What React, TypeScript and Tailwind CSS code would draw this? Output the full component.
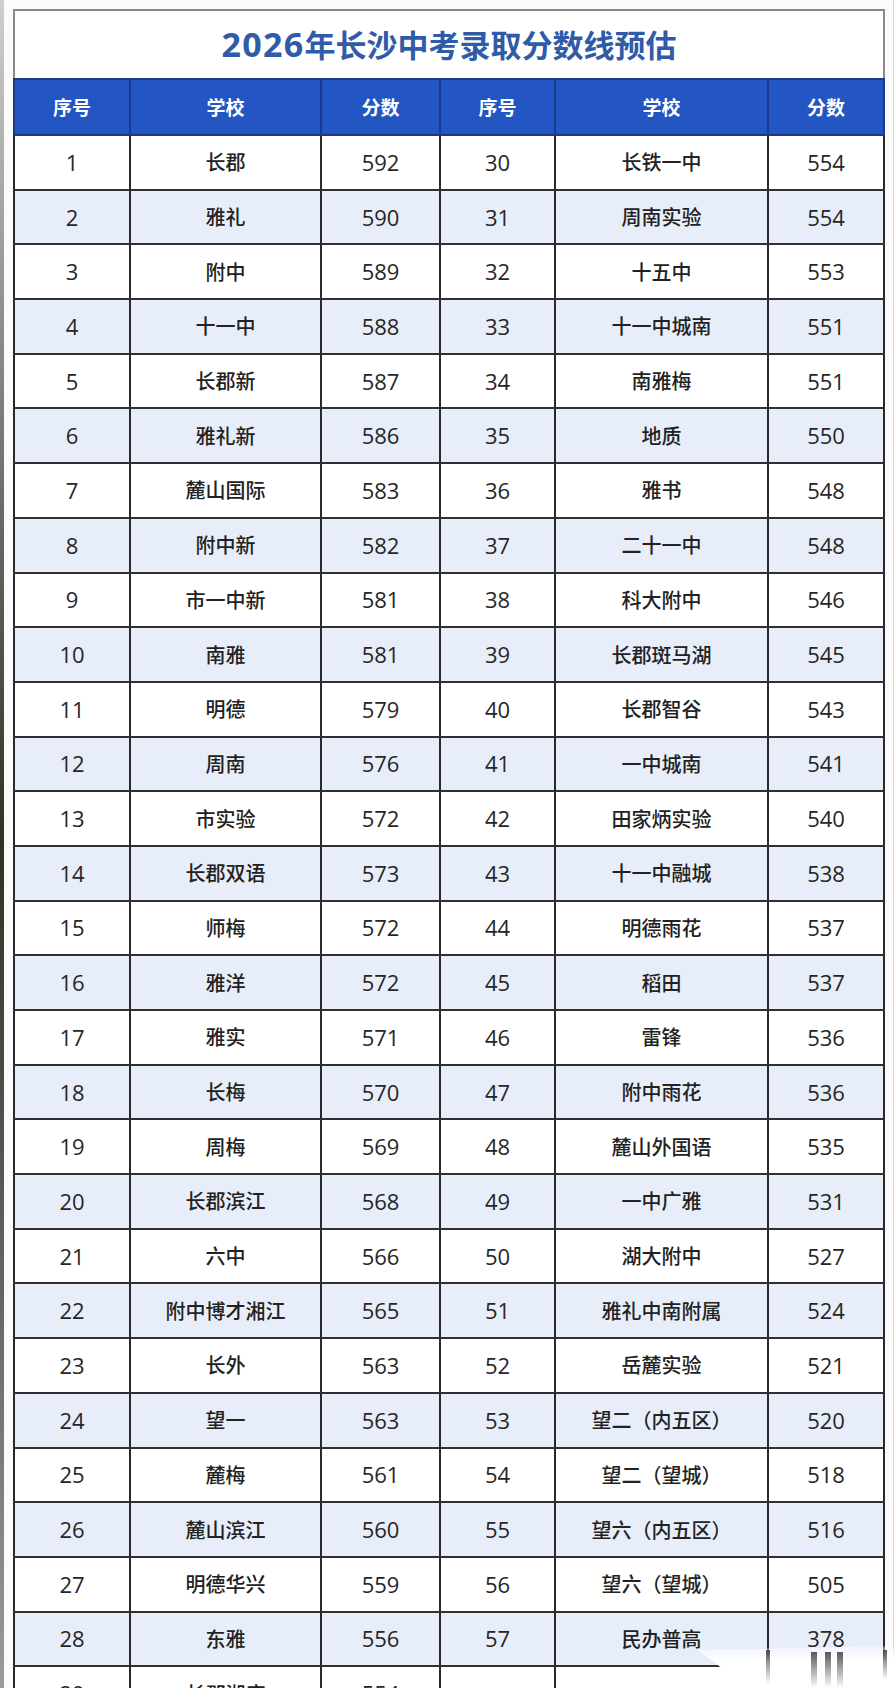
import React from 'react';

type Entry = [number, string, number];

const leftRows: Entry[] = [
  [1, '长郡', 592],
  [2, '雅礼', 590],
  [3, '附中', 589],
  [4, '十一中', 588],
  [5, '长郡新', 587],
  [6, '雅礼新', 586],
  [7, '麓山国际', 583],
  [8, '附中新', 582],
  [9, '市一中新', 581],
  [10, '南雅', 581],
  [11, '明德', 579],
  [12, '周南', 576],
  [13, '市实验', 572],
  [14, '长郡双语', 573],
  [15, '师梅', 572],
  [16, '雅洋', 572],
  [17, '雅实', 571],
  [18, '长梅', 570],
  [19, '周梅', 569],
  [20, '长郡滨江', 568],
  [21, '六中', 566],
  [22, '附中博才湘江', 565],
  [23, '长外', 563],
  [24, '望一', 563],
  [25, '麓梅', 561],
  [26, '麓山滨江', 560],
  [27, '明德华兴', 559],
  [28, '东雅', 556],
  [29, '长郡湘府', 554],
];

const rightRows: Entry[] = [
  [30, '长铁一中', 554],
  [31, '周南实验', 554],
  [32, '十五中', 553],
  [33, '十一中城南', 551],
  [34, '南雅梅', 551],
  [35, '地质', 550],
  [36, '雅书', 548],
  [37, '二十一中', 548],
  [38, '科大附中', 546],
  [39, '长郡斑马湖', 545],
  [40, '长郡智谷', 543],
  [41, '一中城南', 541],
  [42, '田家炳实验', 540],
  [43, '十一中融城', 538],
  [44, '明德雨花', 537],
  [45, '稻田', 537],
  [46, '雷锋', 536],
  [47, '附中雨花', 536],
  [48, '麓山外国语', 535],
  [49, '一中广雅', 531],
  [50, '湖大附中', 527],
  [51, '雅礼中南附属', 524],
  [52, '岳麓实验', 521],
  [53, '望二（内五区）', 520],
  [54, '望二（望城）', 518],
  [55, '望六（内五区）', 516],
  [56, '望六（望城）', 505],
  [57, '民办普高', 378],
];

const cols = "grid grid-cols-[118px_191px_119px_115px_213px_116px]";
const cell = "flex items-center justify-center border-r-2 border-[#2a2a2a]";
const num = "font-['Open_Sans','Noto_Sans_CJK_SC',sans-serif] text-[22px] text-[#262626]";
const name = "font-['Noto_Sans_CJK_SC',sans-serif] text-[20px] font-medium text-[#222]";

function HeaderCell({ label, first }: { label: string; first?: boolean }) {
  return (
    <div
      className={
        first
          ? "flex items-center justify-center border-l-2 border-r-2 border-[#1b3a86]"
          : "flex items-center justify-center border-r-2 border-[#1b3a86]"
      }
    >
      {label}
    </div>
  );
}

function Row({ index }: { index: number }) {
  const l = leftRows[index];
  const r = rightRows[index];
  // every second row gets the pale blue band
  const band = index % 2 === 1 ? "bg-[#e8eef9]" : "bg-white";

  return (
    <div className={`${cols} h-[54.7px] shrink-0 border-b-2 border-[#303030] ${band}`}>
      <div className={`${cell} border-l-2 ${num}`}>{l[0]}</div>
      <div className={`${cell} ${name}`}>{l[1]}</div>
      <div className={`${cell} ${num}`}>{l[2]}</div>
      <div className={`${cell} ${num}`}>{r ? r[0] : ''}</div>
      <div className={`${cell} ${name}`}>{r ? r[1] : ''}</div>
      <div className={`${cell} ${num}`}>{r ? r[2] : ''}</div>
    </div>
  );
}

function Smear() {
  // the blurred white mark over the lower right corner of the photo
  return (
    <svg className="absolute left-[680px] top-[1640px]" width="216" height="48" viewBox="0 0 216 48">
      <defs>
        <linearGradient id="wash" x1="0" y1="0" x2="0" y2="1">
          <stop offset="0" stopColor="#fff" stopOpacity="0.3" />
          <stop offset="0.35" stopColor="#fff" stopOpacity="1" />
          <stop offset="1" stopColor="#fff" stopOpacity="1" />
        </linearGradient>
        <linearGradient id="streak" x1="0" y1="0" x2="0" y2="1">
          <stop offset="0" stopColor="#3a3a3a" stopOpacity="0.85" />
          <stop offset="1" stopColor="#3a3a3a" stopOpacity="0" />
        </linearGradient>
      </defs>
      <polygon points="18,10 216,6 216,48 68,48" fill="url(#wash)" />
      <rect x="86" y="10" width="4" height="34" fill="url(#streak)" />
      <rect x="131" y="12" width="6" height="36" fill="url(#streak)" />
      <rect x="145" y="12" width="6" height="36" fill="url(#streak)" />
      <rect x="157" y="12" width="6" height="36" fill="url(#streak)" />
      <rect x="203" y="10" width="4" height="30" fill="url(#streak)" />
    </svg>
  );
}

export default function App() {
  return (
    <div className="relative flex h-[1688px] w-[896px] overflow-hidden bg-[#fbfbfb]">
      <div className="w-[4px] shrink-0 bg-gradient-to-b from-[#cfcfcf] via-[#2b3326] to-[#9a9a9a]" />
      <div className="ml-[9px] mt-[9px] flex w-[872px] flex-col">
        <div className="flex h-[69px] shrink-0 items-center justify-center border-2 border-b-0 border-[#8a8a8a] bg-white font-['Noto_Sans_CJK_SC',sans-serif] text-[31px] font-bold text-[#2f5ba8]">
          <span className="font-['Open_Sans',sans-serif] text-[34px] tracking-[0.04em]">2026</span>
          年长沙中考录取分数线预估
        </div>
        <div
          className={`${cols} h-[58px] shrink-0 border-t-2 border-b-2 border-[#1b3a86] bg-[#2356c2] font-['Noto_Sans_CJK_SC',sans-serif] text-[19px] font-bold text-white`}
        >
          <HeaderCell label="序号" first />
          <HeaderCell label="学校" />
          <HeaderCell label="分数" />
          <HeaderCell label="序号" />
          <HeaderCell label="学校" />
          <HeaderCell label="分数" />
        </div>
        {leftRows.map((_, i) => (
          <Row key={i} index={i} />
        ))}
      </div>
      <div className="ml-[8px] w-[1px] shrink-0 bg-[#d6d6d6]" />
      <Smear />
    </div>
  );
}
